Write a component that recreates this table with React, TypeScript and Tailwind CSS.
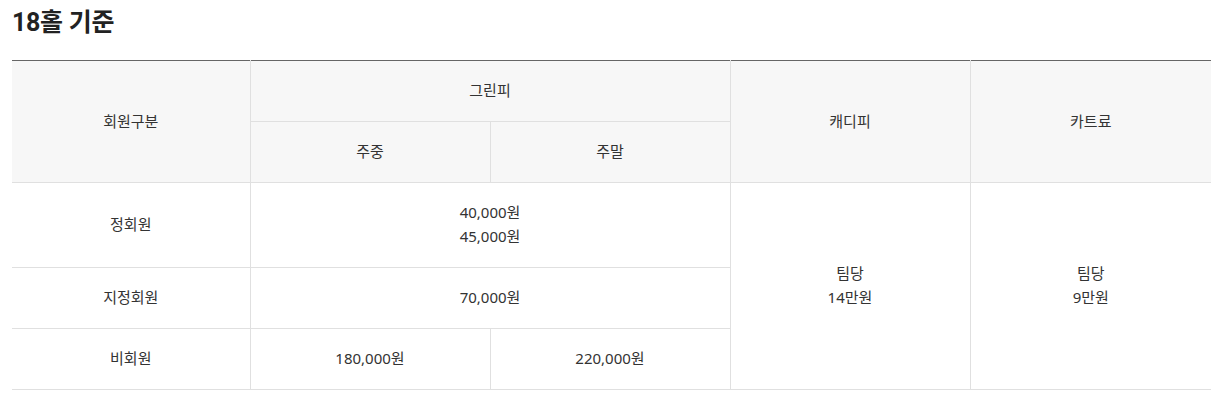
import React from "react";

const th = "bg-[#f7f7f7] border border-[#e0e0e0] font-normal text-center align-middle pt-[17px] pb-[19px] leading-6";
const td = "border border-[#e0e0e0] text-center align-middle pt-[17px] pb-[19px] leading-6";

export default function App() {
  return (
    <div className="bg-white px-3 pt-[5px] text-[#333] font-['Noto_Sans','Noto_Sans_CJK_KR',sans-serif]" style={{ minHeight: 407 }}>
      <h2 className="text-[25px] font-bold leading-9 text-[#222] tracking-[-0.3px] font-['Roboto','Noto_Sans_CJK_KR',sans-serif]">18홀 기준</h2>
      <table className="mt-[19px] w-[1199px] border-collapse table-fixed text-[15px] [&_tr>*:first-child]:border-l-0 [&_tr>*:last-child]:border-r-0">
        <colgroup>
          <col className="w-[238px]" />
          <col className="w-[240px]" />
          <col className="w-[240px]" />
          <col className="w-[240px]" />
          <col className="w-[241px]" />
        </colgroup>
        <thead>
          <tr>
            <th rowSpan={2} className={th + " border-t-[#666]"}>회원구분</th>
            <th colSpan={2} className={th + " border-t-[#666]"}>그린피</th>
            <th rowSpan={2} className={th + " border-t-[#666]"}>캐디피</th>
            <th rowSpan={2} className={th + " border-t-[#666] border-r-0"}>카트료</th>
          </tr>
          <tr>
            <th className={th + " !border-l"}>주중</th>
            <th className={th}>주말</th>
          </tr>
        </thead>
        <tbody>
          <tr>
            <td className={td}>정회원</td>
            <td colSpan={2} className={td}>40,000원<br />45,000원</td>
            <td rowSpan={3} className={td}>팀당<br />14만원</td>
            <td rowSpan={3} className={td + " !border-r-0"}>팀당<br />9만원</td>
          </tr>
          <tr>
            <td className={td}>지정회원</td>
            <td colSpan={2} className={td + " !border-r"}>70,000원</td>
          </tr>
          <tr>
            <td className={td}>비회원</td>
            <td className={td}>180,000원</td>
            <td className={td + " !border-r"}>220,000원</td>
          </tr>
        </tbody>
      </table>
    </div>
  );
}
